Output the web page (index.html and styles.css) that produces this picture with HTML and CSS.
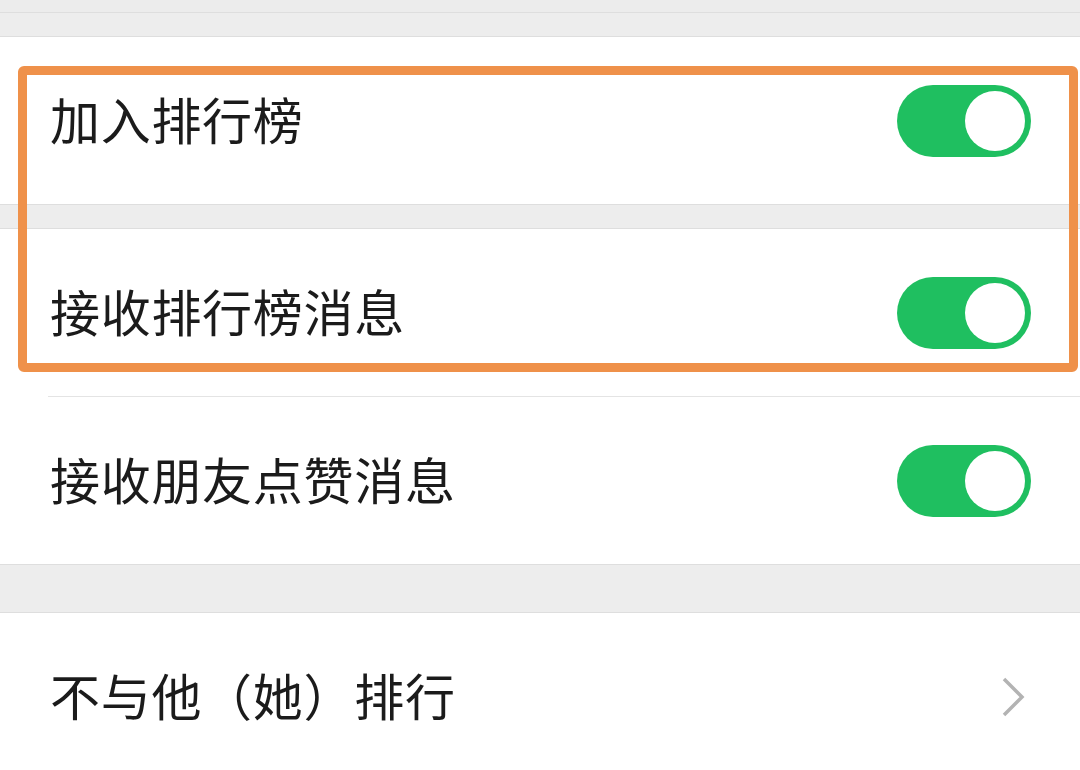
FILE: index.html
```html
<!DOCTYPE html>
<html lang="zh-CN">
<head>
    <meta charset="UTF-8">
    <meta name="viewport" content="width=device-width, initial-scale=1.0">
    <title>排行榜设置</title>
    <link rel="stylesheet" href="styles.css">
</head>
<body>
    <!-- bandes grises du haut -->
    <div class="band band-thin"></div>
    <div class="band band-top"></div>

    <div class="group">
        <div class="cell">
            <span class="label">加入排行榜</span>
            <span class="switch on"><span class="knob"></span></span>
        </div>
    </div>

    <div class="band band-mid"></div>

    <div class="group">
        <div class="cell">
            <span class="label">接收排行榜消息</span>
            <span class="switch on"><span class="knob"></span></span>
        </div>
        <div class="cell divided">
            <span class="label">接收朋友点赞消息</span>
            <span class="switch on"><span class="knob"></span></span>
        </div>
    </div>

    <div class="band band-big"></div>

    <div class="group">
        <div class="cell">
            <span class="label">不与他（她）排行</span>
            <svg class="chevron" width="24" height="40" viewBox="0 0 24 40">
                <path d="M3 2 L21 20 L3 38" fill="none" stroke="#b3b3b3" stroke-width="3.5"/>
            </svg>
        </div>
    </div>

    <!-- cadre orange d'annotation -->
    <div class="highlight"></div>
</body>
</html>
```

FILE: styles.css
```css
body {
    margin: 0;
    background-color: #ededed;
    font-family: "Noto Sans CJK SC", "Noto Sans", sans-serif;
    position: relative;
    width: 1080px;
    height: 770px;
    overflow: hidden;
}

/* bandes grises entre les groupes */
.band {
    background-color: #ededed;
    border-bottom: 1px solid #dedede;
}
.band-thin {
    height: 12px;
    background-color: #ececec;
}
.band-top {
    height: 23px;
}
.band-mid {
    height: 23px;
    border-top: 1px solid #dedede;
}
.band-big {
    height: 47px;
    border-top: 1px solid #dedede;
}

.group {
    background-color: #ffffff;
}

.cell {
    height: 167px;
    display: flex;
    align-items: center;
    justify-content: space-between;
    padding: 0 49px 0 50px;
    position: relative;
}
/* ligne de separation decalee a gauche */
.cell.divided {
    border-top: 1px solid #e4e4e4;
}
.cell.divided::before {
    content: "";
    position: absolute;
    left: 0;
    top: -1px;
    width: 48px;
    height: 1px;
    background-color: #ffffff;
}

.label {
    font-size: 50px;
    color: #1b1b1b;
    line-height: 1;
    letter-spacing: 0.7px;
    margin-bottom: 6px;
}

/* interrupteur vert */
.switch {
    width: 134px;
    height: 72px;
    border-radius: 36px;
    background-color: #1fbf60;
    display: flex;
    align-items: center;
    justify-content: flex-end;
    padding: 0 6px;
    box-sizing: border-box;
}
.knob {
    width: 60px;
    height: 60px;
    border-radius: 50%;
    background-color: #ffffff;
}

.chevron {
    margin-right: 6px;
}

.highlight {
    position: absolute;
    left: 18px;
    top: 66px;
    width: 1060px;
    height: 306px;
    box-sizing: border-box;
    border: 9px solid #ef914a;
    border-radius: 6px;
}
```
